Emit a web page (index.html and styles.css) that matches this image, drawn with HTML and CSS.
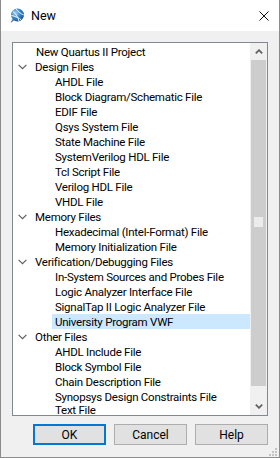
FILE: index.html
```html
<!DOCTYPE html>
<html lang="en">
<head>
  <meta charset="utf-8">
  <title>New</title>
  <link rel="stylesheet" href="styles.css">
</head>
<body>
  <div class="window">
    <div class="titlebar">
      <svg class="app_icon" width="16" height="16" viewBox="0 0 16 16">
        <defs>
          <radialGradient id="globe" cx="0.35" cy="0.35" r="0.7">
            <stop offset="0" stop-color="#9fd0f5"/>
            <stop offset="0.6" stop-color="#2f7fc8"/>
            <stop offset="1" stop-color="#1a4f8f"/>
          </radialGradient>
        </defs>
        <circle cx="8.5" cy="7" r="6.5" fill="url(#globe)"/>
        <path d="M4 3.5 C7 6 9 9 10 13.2 M7 0.8 C9.5 4 12 6 14.8 7 M2.3 7.5 C6 8 10 10 12.5 12" stroke="#ffffff" stroke-width="0.9" fill="none"/>
        <path d="M3.5 11 L1.5 15 L5 12.5 Z" fill="#4a6f99"/>
      </svg>
      <span class="title">New</span>
      <svg class="close" width="10" height="10" viewBox="0 0 10 10">
        <path d="M0.5 0.5 L9.5 9.5 M9.5 0.5 L0.5 9.5" stroke="#111" stroke-width="1"/>
      </svg>
    </div>
    <div class="dialog">
      <div class="listbox">
        <ul class="tree">
          <li class="row top_leaf">New Quartus II Project</li>
          <li class="row group"><span class="chevron"><svg width="9" height="6" viewBox="0 0 9 6"><path d="M0.6 0.8 L4.5 4.7 L8.4 0.8" stroke="#5f5f5f" stroke-width="1.2" fill="none"/></svg></span>Design Files</li>
          <li class="row child">AHDL File</li>
          <li class="row child">Block Diagram/Schematic File</li>
          <li class="row child">EDIF File</li>
          <li class="row child">Qsys System File</li>
          <li class="row child">State Machine File</li>
          <li class="row child">SystemVerilog HDL File</li>
          <li class="row child">Tcl Script File</li>
          <li class="row child">Verilog HDL File</li>
          <li class="row child">VHDL File</li>
          <li class="row group"><span class="chevron"><svg width="9" height="6" viewBox="0 0 9 6"><path d="M0.6 0.8 L4.5 4.7 L8.4 0.8" stroke="#5f5f5f" stroke-width="1.2" fill="none"/></svg></span>Memory Files</li>
          <li class="row child">Hexadecimal (Intel-Format) File</li>
          <li class="row child">Memory Initialization File</li>
          <li class="row group"><span class="chevron"><svg width="9" height="6" viewBox="0 0 9 6"><path d="M0.6 0.8 L4.5 4.7 L8.4 0.8" stroke="#5f5f5f" stroke-width="1.2" fill="none"/></svg></span>Verification/Debugging Files</li>
          <li class="row child">In-System Sources and Probes File</li>
          <li class="row child">Logic Analyzer Interface File</li>
          <li class="row child">SignalTap II Logic Analyzer File</li>
          <li class="row child selected">University Program VWF</li>
          <li class="row group"><span class="chevron"><svg width="9" height="6" viewBox="0 0 9 6"><path d="M0.6 0.8 L4.5 4.7 L8.4 0.8" stroke="#5f5f5f" stroke-width="1.2" fill="none"/></svg></span>Other Files</li>
          <li class="row child">AHDL Include File</li>
          <li class="row child">Block Symbol File</li>
          <li class="row child">Chain Description File</li>
          <li class="row child">Synopsys Design Constraints File</li>
          <li class="row child last">Text File</li>
        </ul>
        <div class="scrollbar">
          <div class="scroll_btn">
            <svg width="8" height="5" viewBox="0 0 8 5"><path d="M0.8 4.3 L4 1.2 L7.2 4.3" stroke="#606060" stroke-width="1.8" fill="none"/></svg>
          </div>
          <div class="scroll_track">
            <div class="scroll_thumb"><span class="thumb_mark"></span></div>
          </div>
          <div class="scroll_btn">
            <svg width="8" height="5" viewBox="0 0 8 5"><path d="M0.8 0.7 L4 3.8 L7.2 0.7" stroke="#606060" stroke-width="1.8" fill="none"/></svg>
          </div>
        </div>
      </div>
      <div class="buttons">
        <button class="btn default" type="button">OK</button>
        <button class="btn" type="button">Cancel</button>
        <button class="btn" type="button">Help</button>
      </div>
      <svg class="grip" width="9" height="9" viewBox="0 0 9 9">
        <rect x="7" y="1" width="2" height="2" fill="#c4c4c4"/>
        <rect x="4" y="4" width="2" height="2" fill="#c4c4c4"/>
        <rect x="7" y="4" width="2" height="2" fill="#c4c4c4"/>
        <rect x="1" y="7" width="2" height="2" fill="#c4c4c4"/>
        <rect x="4" y="7" width="2" height="2" fill="#c4c4c4"/>
        <rect x="7" y="7" width="2" height="2" fill="#c4c4c4"/>
      </svg>
    </div>
  </div>
</body>
</html>
```

FILE: styles.css
```css
* {
  box-sizing: border-box;
}

body {
  margin: 0;
  width: 280px;
  height: 458px;
  overflow: hidden;
  font-family: Roboto, "Noto Sans", sans-serif;
  font-size: 11.5px;
  letter-spacing: -0.25px;
  color: #000;
}

.window {
  width: 280px;
  height: 458px;
  border: 1px solid #8c8c8c;
  border-top: none;
  background-color: #f0f0f0;
  display: flex;
  flex-direction: column;
}

.titlebar {
  height: 31px;
  background-color: #fff;
  display: flex;
  align-items: center;
  padding-left: 8px;
  padding-right: 10px;
}

.title {
  margin-left: 6px;
  font-size: 12.5px;
  letter-spacing: 0;
  flex: 1;
}

.close {
  margin-top: 1px;
}

.dialog {
  position: relative;
  flex: 1;
  padding: 11px 0 0 11px;
}

.listbox {
  width: 256px;
  height: 374px;
  border: 1px solid #828790;
  background-color: #fff;
  display: flex;
}

.tree {
  list-style: none;
  margin: 0;
  padding: 1px 0 0 0;
  flex: 1;
}

.row {
  height: 15px;
  line-height: 14px;
  display: flex;
  align-items: center;
  white-space: nowrap;
}

.row.last {
  height: 11px;
  padding-top: 2px;
  line-height: 9px;
  align-items: flex-start;
}

.top_leaf {
  padding-left: 23px;
}

.group {
  padding-left: 5px;
}

.chevron {
  display: flex;
  width: 9px;
  margin-right: 8px;
}

.child {
  margin-left: 39px;
  padding-left: 3px;
}

.selected {
  background-color: #cce8ff;
}

.scrollbar {
  width: 17px;
  background-color: #f0f0f0;
  display: flex;
  flex-direction: column;
}

.scroll_btn {
  height: 17px;
  display: flex;
  align-items: center;
  justify-content: center;
}

.scroll_track {
  flex: 1;
}

.scroll_thumb {
  position: relative;
  height: 326px;
  margin: 0 1px;
  background-color: #cdcdcd;
}

.thumb_mark {
  position: absolute;
  top: 157px;
  left: 3px;
  width: 9px;
  height: 10px;
  background-color: #ececec;
}

.buttons {
  width: 257px;
  margin-top: 8px;
  display: flex;
  justify-content: flex-end;
  gap: 8px;
  padding-right: 1px;
}

.btn {
  width: 73px;
  height: 21px;
  padding: 0;
  font-family: Roboto, "Noto Sans", sans-serif;
  font-size: 12px;
  color: #000;
  background-color: #e1e1e1;
  border: 1px solid #adadad;
  border-radius: 0;
}

.btn.default {
  border: 2px solid #0078d7;
}

.grip {
  position: absolute;
  right: 2px;
  bottom: 1px;
}
```
